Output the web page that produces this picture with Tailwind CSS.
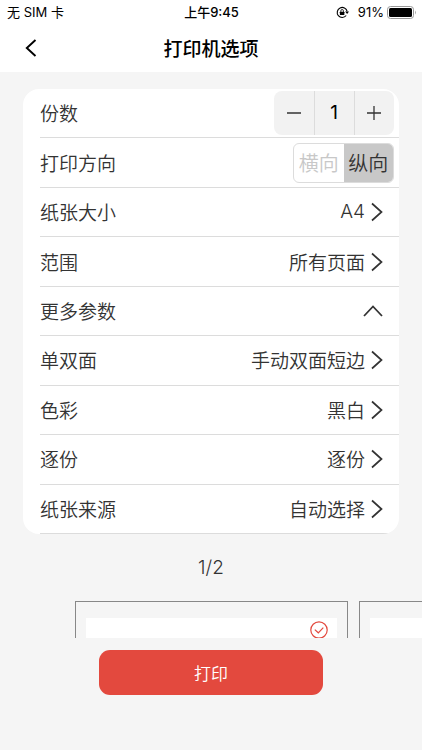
<!DOCTYPE html>
<html lang="zh-CN">
<head>
<meta charset="utf-8">
<meta name="viewport" content="width=device-width, initial-scale=1">
<title>打印机选项</title>
<script src="https://cdn.jsdelivr.net/npm/@tailwindcss/browser@4"></script>
</head>
<body class="flex min-h-screen flex-col overflow-x-hidden bg-[#f5f5f5] font-['Noto_Sans_CJK_SC',sans-serif] text-[19px] leading-7 text-[#333]">
<svg class="hidden" aria-hidden="true">
  <symbol id="chevron" viewBox="0 0 12 20"><path d="M1 1.5 10.5 10 1 18.5" fill="none" stroke="currentColor" stroke-width="1.7"/></symbol>
</svg>

<header class="bg-white text-black">
  <div class="grid h-6 grid-cols-3 items-center pr-1.5 pl-[7px] font-['Inter','Noto_Sans_CJK_SC',sans-serif] text-[13px] leading-5">
    <span>无 SIM 卡</span>
    <span class="text-center font-medium">上午9:45</span>
    <span class="flex items-center justify-end gap-[3px]">
      <svg class="mr-1.5 size-[13px]" viewBox="0 0 14 14" fill="none" stroke="currentColor" aria-hidden="true">
        <path d="M11 10.2A5.4 5.4 0 1 1 12 5.8" stroke-width="1.2"/>
        <path d="m9.8 6 2.2 2.6L14 6z" fill="currentColor" stroke="none"/>
        <rect x="4.2" y="6.2" width="4.8" height="3.6" rx=".5" fill="currentColor" stroke="none"/>
        <path d="M5.2 6.4V5.2a1.4 1.4 0 0 1 2.8 0v1.2" stroke-width=".9"/>
      </svg>
      <span>91%</span>
      <svg class="h-[13px] w-[29px]" viewBox="0 0 29 13" aria-hidden="true">
        <rect x=".5" y=".5" width="26" height="12" rx="3" fill="none" stroke="#999"/>
        <rect x="2" y="2" width="23" height="9" rx="1.5"/>
        <path d="M28 4.5q1.5 2 0 4z" fill="#999"/>
      </svg>
    </span>
  </div>
  <nav class="grid h-12 grid-cols-[1fr_auto_1fr] items-center">
    <button type="button" aria-label="返回" class="ml-[19px] flex size-6 items-center justify-center">
      <svg class="h-[18px] w-3" viewBox="0 0 12 18" fill="none" stroke="currentColor" stroke-width="1.9" aria-hidden="true"><path d="M10.5 1 1.8 9l8.7 8"/></svg>
    </button>
    <h1 class="font-medium">打印机选项</h1>
  </nav>
</header>

<main class="flex flex-col pt-[17px]">
  <ul class="mx-[23px] grid min-h-[445px] auto-rows-fr overflow-hidden rounded-[16px] bg-white pl-[17px] font-[350] *:flex *:items-center *:justify-between *:border-b *:border-[#dcdcdc]">
    <li>
      <label for="copies">份数</label>
      <div class="mr-[5px] flex h-11 w-[120px] divide-x-1 divide-[#dcdcdc] overflow-hidden rounded-lg bg-[#f2f2f2]">
        <button type="button" aria-label="减少" class="flex flex-1 items-center justify-center"><svg class="size-3.5" viewBox="0 0 14 14" stroke="currentColor" stroke-width="1.3" aria-hidden="true"><path d="M0 7h14"/></svg></button>
        <input id="copies" type="text" inputmode="numeric" value="1" class="w-10 text-center font-['Inter',sans-serif] font-normal text-black">
        <button type="button" aria-label="增加" class="flex flex-1 items-center justify-center"><svg class="size-3.5" viewBox="0 0 14 14" stroke="currentColor" stroke-width="1.3" aria-hidden="true"><path d="M0 7h14M7 0v14"/></svg></button>
      </div>
    </li>
    <li>
      <span id="direction">打印方向</span>
      <div role="radiogroup" aria-labelledby="direction" class="mr-[5px] flex h-10 w-[101px] overflow-hidden rounded-md border border-[#dcdcdc] text-xl">
        <label class="flex flex-1 items-center justify-center text-[#c8c8c8] has-checked:bg-[#c8c8c8] has-checked:text-[#333]"><input type="radio" name="direction" class="sr-only">横向</label>
        <label class="flex flex-1 items-center justify-center text-[#c8c8c8] has-checked:bg-[#c8c8c8] has-checked:text-[#333]"><input type="radio" name="direction" class="sr-only" checked>纵向</label>
      </div>
    </li>
    <li><button type="button" class="flex h-full w-full items-center pr-4"><span>纸张大小</span><span class="ml-auto font-['Inter',sans-serif]">A4</span><svg class="ml-1.5 h-5 w-3" aria-hidden="true"><use href="#chevron"/></svg></button></li>
    <li><button type="button" class="flex h-full w-full items-center pr-4"><span>范围</span><span class="ml-auto">所有页面</span><svg class="ml-1.5 h-5 w-3" aria-hidden="true"><use href="#chevron"/></svg></button></li>
    <li><button type="button" aria-expanded="true" class="flex h-full w-full items-center justify-between pr-4"><span>更多参数</span><svg class="h-3 w-5" viewBox="0 0 20 12" fill="none" stroke="currentColor" stroke-width="1.8" aria-hidden="true"><path d="M1 11 10 1.5 19 11"/></svg></button></li>
    <li><button type="button" class="flex h-full w-full items-center pr-4"><span>单双面</span><span class="ml-auto">手动双面短边</span><svg class="ml-1.5 h-5 w-3" aria-hidden="true"><use href="#chevron"/></svg></button></li>
    <li><button type="button" class="flex h-full w-full items-center pr-4"><span>色彩</span><span class="ml-auto">黑白</span><svg class="ml-1.5 h-5 w-3" aria-hidden="true"><use href="#chevron"/></svg></button></li>
    <li><button type="button" class="flex h-full w-full items-center pr-4"><span>逐份</span><span class="ml-auto">逐份</span><svg class="ml-1.5 h-5 w-3" aria-hidden="true"><use href="#chevron"/></svg></button></li>
    <li><button type="button" class="flex h-full w-full items-center pr-4"><span>纸张来源</span><span class="ml-auto">自动选择</span><svg class="ml-1.5 h-5 w-3" aria-hidden="true"><use href="#chevron"/></svg></button></li>
  </ul>

  <p class="mt-5 text-center font-['Inter',sans-serif] font-[350]">1/2</p>

  <div class="mt-[19px] flex h-[37px] gap-[11px] overflow-hidden pl-[75px]">
    <div class="w-[273px] shrink-0 border border-b-0 border-[#888] px-2.5 pt-4">
      <div class="flex h-full justify-end bg-white pt-[3px] pr-[9px]">
        <svg class="size-[18px] shrink-0 text-[#e3493e]" viewBox="0 0 18 18" fill="none" stroke="currentColor" stroke-width="1.2" role="img" aria-label="已选中"><circle cx="9" cy="9" r="8.2"/><path d="m4.8 8.6 3.5 3.2 5-5.2"/></svg>
      </div>
    </div>
    <div class="w-[273px] shrink-0 border border-b-0 border-[#888] px-2.5 pt-4">
      <div class="h-full bg-white"></div>
    </div>
  </div>

  <button type="button" class="mx-auto mt-3 h-[45px] w-[53%] rounded-[11px] bg-[#e3493e] text-[17px] font-[350] text-white">打印</button>
</main>
</body>
</html>
